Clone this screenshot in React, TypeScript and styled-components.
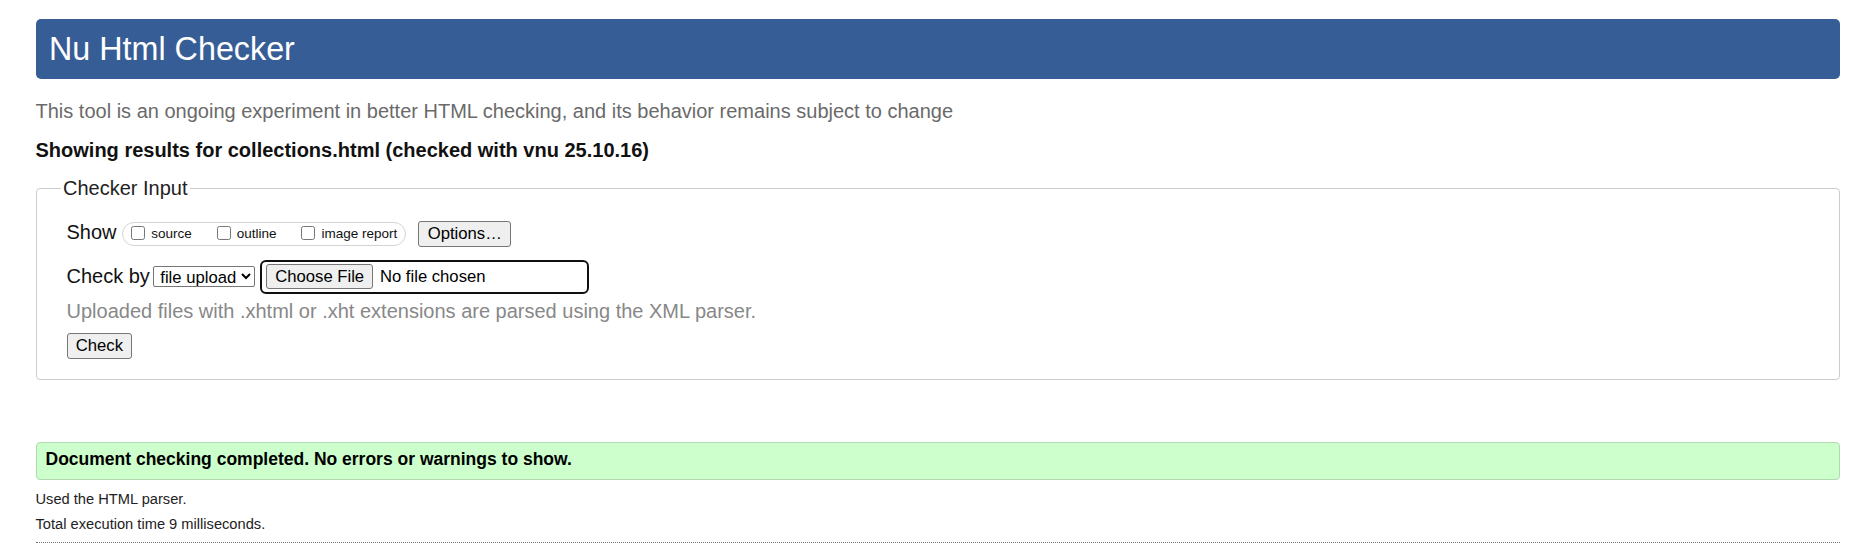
import React from "react";
import styled, { createGlobalStyle } from "styled-components";

const SANS = `"Liberation Sans", Arial, Helvetica, sans-serif`;

const Global = createGlobalStyle`
  html, body { margin: 0; padding: 0; background: #ffffff; }
  body { font-family: ${SANS}; color: #111; }
  * { box-sizing: border-box; }
`;

const Page = styled.div`
  padding: 19px 22.5px 0 35.5px;
`;

const Header = styled.header`
  height: 60px;
  background: #365d96;
  border-radius: 5px;
  display: flex;
  align-items: center;
  padding-left: 13.5px;
`;

const Title = styled.h1`
  margin: 0;
  font-size: 32.3px;
  line-height: 37px;
  font-weight: normal;
  color: #ffffff;
`;

const Intro = styled.p`
  margin: 21px 0 0;
  font-size: 20px;
  line-height: 23px;
  color: #6a6a6a;
`;

const ResultsHeading = styled.h2`
  margin: 16px 0 0;
  font-size: 20px;
  line-height: 23px;
  font-weight: bold;
  color: #111111;
`;

const Fieldset = styled.fieldset`
  margin: 14.5px 0 0;
  padding: 21px 30px 20px 30px;
  border: 1px solid #cccccc;
  border-radius: 4px;
  min-width: 0;
`;

const Legend = styled.legend`
  padding: 0 2px;
  margin-left: -5.5px;
  font-size: 20px;
  line-height: 23px;
  color: #222222;
`;

const ShowRow = styled.div`
  display: flex;
  align-items: flex-start;
  height: 26px;
`;

const CheckByRow = styled.div`
  display: flex;
  align-items: center;
  height: 34px;
  margin-top: 13px;
`;

const RowLabel = styled.span<{ $gap: number }>`
  font-size: 20px;
  line-height: 23px;
  color: #111111;
  margin-right: ${(p) => p.$gap}px;
`;

const CheckGroup = styled.div`
  display: inline-flex;
  align-items: center;
  gap: 25px;
  height: 24px;
  margin-top: 1px;
  padding: 0 7.5px 0 8.3px;
  border: 1px solid #d3d3d3;
  border-radius: 12px;
`;

const CheckLabel = styled.label`
  display: inline-flex;
  align-items: center;
  font-size: 13.5px;
  line-height: 16px;
  color: #111111;
`;

const Checkbox = styled.input.attrs({ type: "checkbox" })`
  width: 14px;
  height: 14px;
  margin: 0 6px 2px 0;
`;

const Button = styled.button<{ $h?: number }>`
  height: ${(p) => p.$h ?? 26}px;
  padding: 0 8.3px;
  font-family: ${SANS};
  font-size: 16.67px;
  color: #000000;
  background: #efefef;
  border: 1px solid #767676;
  border-radius: 3px;
`;

const OptionsButton = styled(Button)`
  margin-left: 12.7px;
`;

const Select = styled.select`
  width: 102px;
  height: 21px;
  font-family: ${SANS};
  font-size: 16.67px;
  color: #000000;
  background: #ffffff;
  border: 1px solid #767676;
  border-radius: 2px;
  padding: 0 0 0 2px;
`;

const FileBox = styled.div`
  display: flex;
  align-items: center;
  width: 329px;
  height: 34px;
  margin-left: 4.3px;
  padding-left: 4.4px;
  border: 2px solid #101010;
  border-radius: 6px;
  gap: 6.5px;
`;

const FileName = styled.span`
  font-size: 16.67px;
  color: #000000;
`;

const Hint = styled.div`
  margin-top: 6px;
  font-size: 20px;
  line-height: 23px;
  color: #888888;
`;

const CheckButton = styled(Button)`
  display: block;
  margin-top: 10px;
`;

const Success = styled.div`
  margin-top: 62px;
  padding: 6.5px 9px 9.5px;
  background: #ccffcc;
  border: 1px solid #b3d9b3;
  border-radius: 4px;
  font-size: 17.5px;
  line-height: 20px;
  font-weight: bold;
  color: #000000;
`;

const Note = styled.p<{ $top: number }>`
  margin: ${(p) => p.$top}px 0 0;
  font-size: 14.67px;
  line-height: 17px;
  color: #222222;
`;

const Rule = styled.hr`
  margin: 9px 0 0;
  border: 0;
  border-top: 1px dotted #777777;
  height: 0;
`;

export default function App() {
  return (
    <>
      <Global />
      <Page>
        <Header>
          <Title>Nu Html Checker</Title>
        </Header>
        <Intro>
          This tool is an ongoing experiment in better HTML checking, and its behavior remains subject to change
        </Intro>
        <ResultsHeading>Showing results for collections.html (checked with vnu 25.10.16)</ResultsHeading>
        <Fieldset>
          <Legend>Checker Input</Legend>
          <ShowRow>
            <RowLabel $gap={5.3}>Show</RowLabel>
            <CheckGroup>
              <CheckLabel>
                <Checkbox />
                source
              </CheckLabel>
              <CheckLabel>
                <Checkbox />
                outline
              </CheckLabel>
              <CheckLabel>
                <Checkbox />
                image report
              </CheckLabel>
            </CheckGroup>
            <OptionsButton type="button">Options…</OptionsButton>
          </ShowRow>
          <CheckByRow>
            <RowLabel $gap={3.4}>Check by</RowLabel>
            <Select defaultValue="file">
              <option value="address">address</option>
              <option value="file">file upload</option>
              <option value="text">text input</option>
            </Select>
            <FileBox>
              <Button type="button" $h={25}>Choose File</Button>
              <FileName>No file chosen</FileName>
            </FileBox>
          </CheckByRow>
          <Hint>Uploaded files with .xhtml or .xht extensions are parsed using the XML parser.</Hint>
          <CheckButton type="button">Check</CheckButton>
        </Fieldset>
        <Success>Document checking completed. No errors or warnings to show.</Success>
        <Note $top={11.5}>Used the HTML parser.</Note>
        <Note $top={8}>Total execution time 9 milliseconds.</Note>
        <Rule />
      </Page>
    </>
  );
}
